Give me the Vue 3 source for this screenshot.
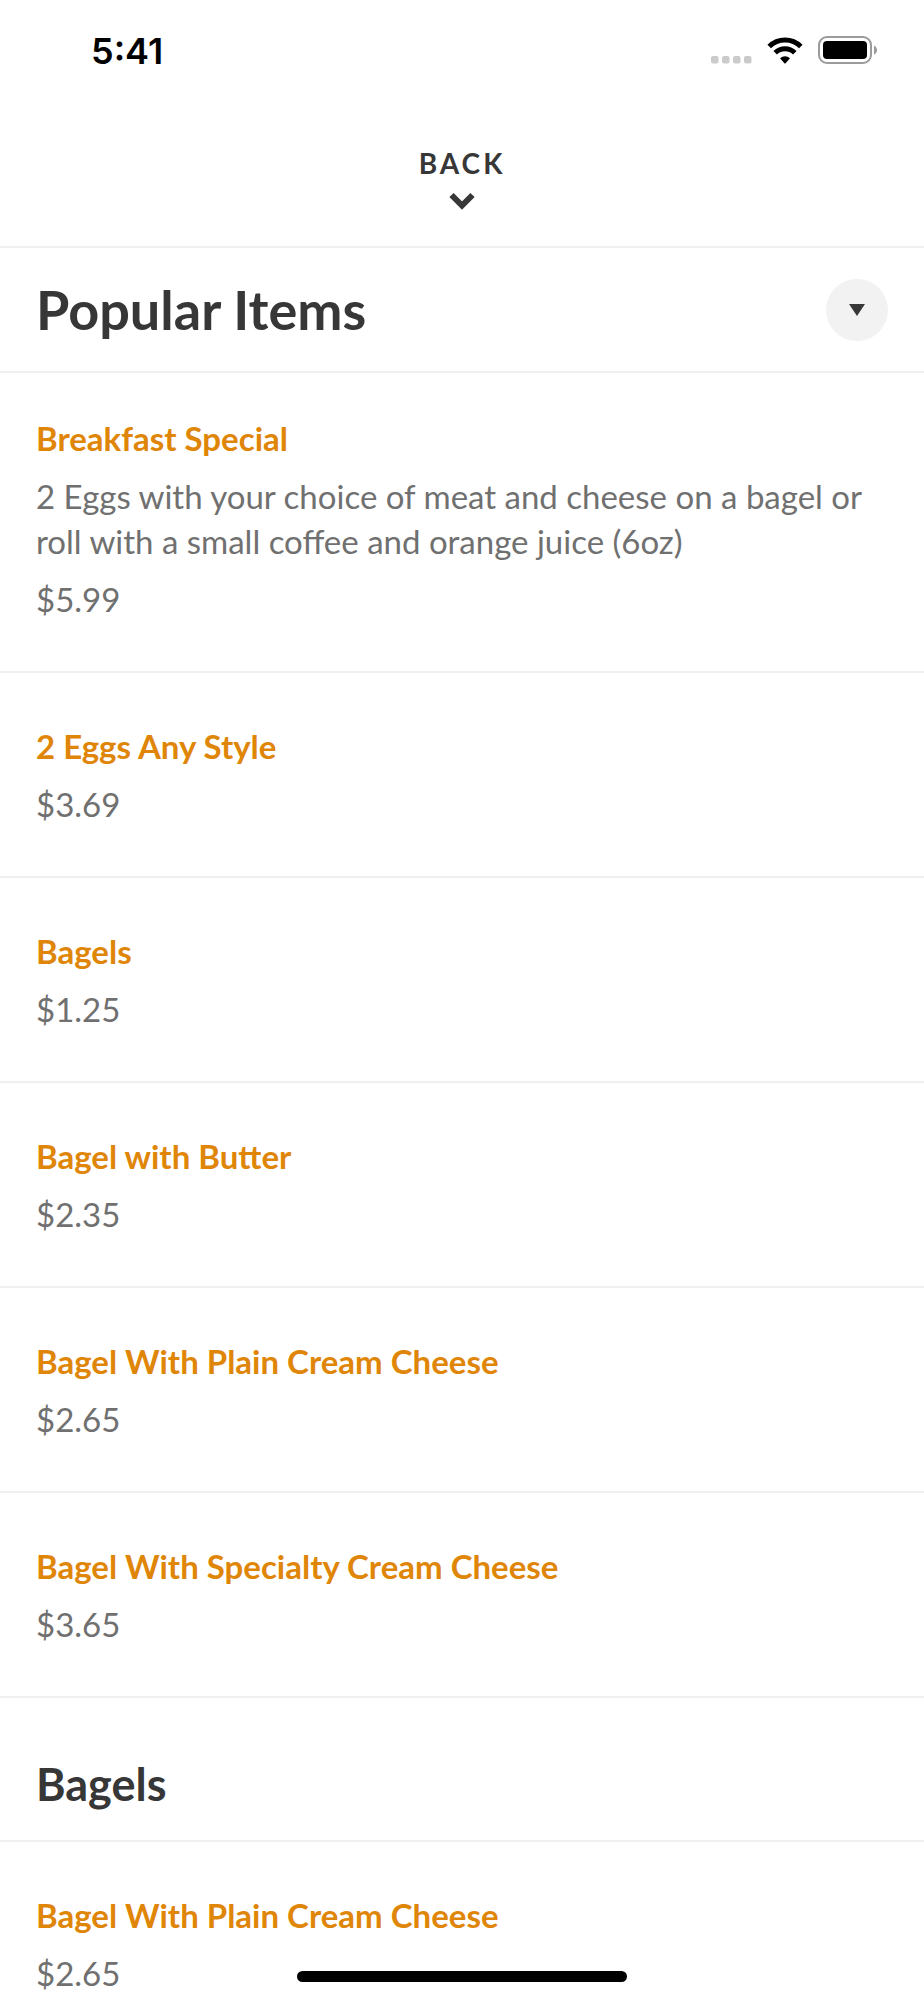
<script setup>
const sections = [
  {
    name: 'Popular Items',
    lead: true,
    items: [
      {
        name: 'Breakfast Special',
        description:
          '2 Eggs with your choice of meat and cheese on a bagel or roll with a small coffee and orange juice (6oz)',
        price: '$5.99',
      },
      { name: '2 Eggs Any Style', price: '$3.69' },
      { name: 'Bagels', price: '$1.25' },
      { name: 'Bagel with Butter', price: '$2.35' },
      { name: 'Bagel With Plain Cream Cheese', price: '$2.65' },
      { name: 'Bagel With Specialty Cream Cheese', price: '$3.65' },
    ],
  },
  {
    name: 'Bagels',
    lead: false,
    items: [{ name: 'Bagel With Plain Cream Cheese', price: '$2.65' }],
  },
]
</script>

<template>
  <div class="screen">
    <div class="status">
      <time class="clock">5:41</time>
      <div class="indicators">
        <svg class="signal" width="41" height="8" viewBox="0 0 41 8" aria-hidden="true">
          <rect x="0" width="7.5" height="7.5" rx="2" />
          <rect x="11" width="7.5" height="7.5" rx="2" />
          <rect x="22" width="7.5" height="7.5" rx="2" />
          <rect x="33" width="7.5" height="7.5" rx="2" />
        </svg>
        <svg class="wifi" width="36" height="27" viewBox="0 0 36 27" aria-hidden="true">
          <path d="M2.2 9.4 A22.4 22.4 0 0 1 33.8 9.4" />
          <path d="M8.2 15.8 A14 14 0 0 1 27.8 15.8" />
          <path class="wifi-dot" d="M13 21.2 Q18 17.2 23 21.2 L18.6 26.2 Q18 26.8 17.4 26.2 Z" />
        </svg>
        <svg class="battery" width="59" height="28" viewBox="0 0 59 28" aria-hidden="true">
          <rect class="battery-shell" x="1" y="1" width="52" height="26" rx="8" />
          <rect x="5" y="5" width="44" height="18" rx="4" />
          <path class="battery-cap" d="M56 9.5 Q59 11 59 14 Q59 17 56 18.5 Z" />
        </svg>
      </div>
    </div>

    <header class="topbar">
      <button class="back" type="button">
        <span>BACK</span>
        <svg width="26" height="18" viewBox="0 0 26 18" aria-hidden="true">
          <path d="M2.5 3 L13 13.5 L23.5 3" />
        </svg>
      </button>
    </header>

    <main class="menu">
      <section v-for="section in sections" :key="section.name">
        <div class="heading" :class="{ lead: section.lead }">
          <h1 v-if="section.lead">{{ section.name }}</h1>
          <h2 v-else>{{ section.name }}</h2>
          <button v-if="section.lead" class="toggle" type="button" aria-label="Choose a category">
            <svg width="16" height="12" viewBox="0 0 16 12" aria-hidden="true">
              <path d="M0 0 H16 L8 12 Z" />
            </svg>
          </button>
        </div>
        <ul class="items" :class="{ lead: section.lead }">
          <li v-for="item in section.items" :key="item.name">
            <a href="#" class="name">{{ item.name }}</a>
            <p v-if="item.description">{{ item.description }}</p>
            <p>{{ item.price }}</p>
          </li>
        </ul>
      </section>
    </main>

    <div class="home-indicator"></div>
  </div>
</template>

<style>
body {
  margin: 0;
  background: #ffffff;
}
</style>

<style scoped>
.screen {
  display: flex;
  flex-direction: column;
  height: 100vh;
  overflow: hidden;
  background: #ffffff;
  color: #373737;
  font-family: Lato, "Liberation Sans", sans-serif;
}

.status {
  display: flex;
  flex: none;
  justify-content: space-between;
  padding: 30px 47px 0 91px;
}

.clock {
  color: #000000;
  font: 600 36px/42px Inter, "Liberation Sans", sans-serif;
}

.indicators {
  display: flex;
  align-items: flex-end;
  gap: 15px;
  height: 34px;
}

.signal {
  fill: #cbcbcb;
}

.wifi path {
  fill: none;
  stroke: #000000;
  stroke-width: 5;
}

.wifi .wifi-dot {
  fill: #000000;
  stroke: none;
}

.battery .battery-shell {
  fill: none;
  stroke: #9b9b9b;
  stroke-width: 2;
}

.battery .battery-cap {
  fill: #9b9b9b;
}

.topbar {
  display: flex;
  flex: none;
  justify-content: center;
  padding: 74px 36px 36px;
  border-bottom: 2px solid #f0f0f0;
}

button {
  margin: 0;
  padding: 0;
  border: 0;
  color: inherit;
  font: inherit;
  cursor: pointer;
}

.back {
  display: flex;
  flex-direction: column;
  align-items: center;
  gap: 12px;
  background: none;
  font-size: 28px;
  font-weight: 700;
  line-height: 34px;
  letter-spacing: 3px;
}

.back path {
  fill: none;
  stroke: #373737;
  stroke-width: 6;
}

.menu {
  flex: 1;
  min-height: 0;
  overflow-y: auto;
  scrollbar-width: none;
}

.heading {
  display: flex;
  align-items: center;
  justify-content: space-between;
  padding: 58px 36px 28px;
  border-bottom: 2px solid #f0f0f0;
}

.heading.lead {
  padding: 28px 36px;
}

h1,
h2 {
  margin: 0;
  font-weight: 700;
}

h1 {
  font-size: 54px;
  line-height: 67px;
}

h2 {
  font-size: 45px;
  line-height: 56px;
}

.toggle {
  display: flex;
  align-items: center;
  justify-content: center;
  width: 62px;
  height: 62px;
  border-radius: 50%;
  background: #f2f2f2;
}

.toggle svg {
  fill: #373737;
}

.items {
  margin: 0;
  padding: 0;
  list-style: none;
}

.items li {
  display: flex;
  flex-direction: column;
  align-items: flex-start;
  gap: 13px;
  padding: 51px 36px 49px;
  border-bottom: 2px solid #f0f0f0;
  font-size: 33px;
  line-height: 45px;
}

.items.lead li:first-child {
  padding-top: 43px;
}

.name {
  color: #df8608;
  font-weight: 700;
  text-decoration: none;
}

.items p {
  margin: 0;
  color: #707070;
}

.home-indicator {
  position: fixed;
  bottom: 18px;
  left: 50%;
  width: 330px;
  height: 11px;
  border-radius: 6px;
  background: #000000;
  transform: translateX(-50%);
}
</style>
